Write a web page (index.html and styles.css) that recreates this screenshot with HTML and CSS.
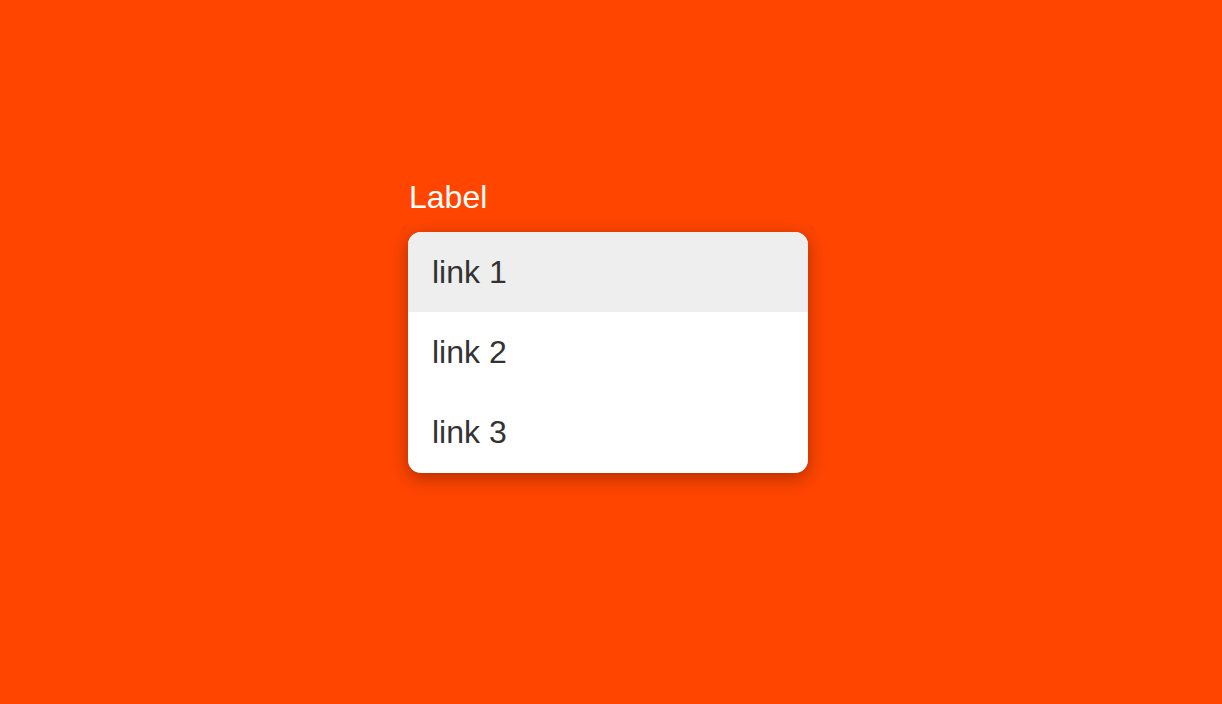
FILE: index.html
```html
<!DOCTYPE html>
<html lang="en">
<head>
<meta charset="utf-8">
<title>Menu</title>
<link rel="stylesheet" href="styles.css">
</head>
<body>
<div class="page">
  <div class="field">
    <div class="label">Label</div>
    <ul class="menu">
      <li class="item active">link 1</li>
      <li class="item">link 2</li>
      <li class="item">link 3</li>
    </ul>
  </div>
</div>
</body>
</html>
```
FILE: styles.css
```css
html, body {
  margin: 0;
  height: 100%;
  background: #ff4500;
  font-family: "Liberation Sans", Arial, sans-serif;
}
.page {
  padding: 179px 0 0 408px;
}
.field {
  width: 400px;
  display: flex;
  flex-direction: column;
  gap: 16px;
}
.label {
  color: #fff;
  font-size: 32px;
  line-height: 37px;
  padding-left: 1px;
}
.menu {
  list-style: none;
  margin: 0;
  padding: 0 0 1px;
  background: #fff;
  border-radius: 13px;
  overflow: hidden;
  box-shadow: 0 5px 18px rgba(0, 0, 0, 0.32);
}
.item {
  height: 80px;
  display: flex;
  align-items: center;
  padding: 0 24px;
  font-size: 32px;
  color: #333;
}
.item.active {
  background: #eee;
}
```
